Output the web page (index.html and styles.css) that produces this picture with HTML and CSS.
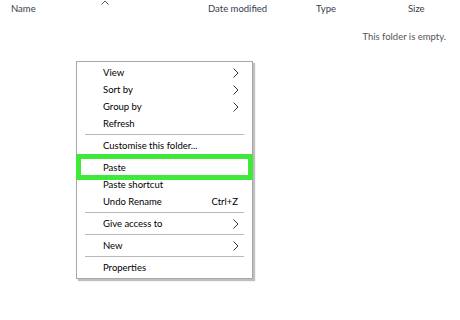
FILE: index.html
```html
<!DOCTYPE html>
<html lang="en">
<head>
  <meta charset="UTF-8">
  <title>This folder is empty</title>
  <link rel="stylesheet" href="styles.css">
</head>
<body>

<div id="explorer">
  <div class="column-header">
    <span class="col col-name">Name</span>
    <span class="col col-date">Date modified</span>
    <span class="col col-type">Type</span>
    <span class="col col-size">Size</span>
    <svg class="sort-caret" width="8" height="5" viewBox="0 0 8 5">
      <path d="M0.5 4.5 L4 1 L7.5 4.5" fill="none" stroke="#555" stroke-width="1"/>
    </svg>
  </div>
  <div class="empty-note">This folder is empty.</div>

  <div id="context-menu">
    <div class="menu-item">View<svg class="arrow" viewBox="0 0 6 10"><path d="M0.5 0.5 L5 5 L0.5 9.5"/></svg></div>
    <div class="menu-item">Sort by<svg class="arrow" viewBox="0 0 6 10"><path d="M0.5 0.5 L5 5 L0.5 9.5"/></svg></div>
    <div class="menu-item">Group by<svg class="arrow" viewBox="0 0 6 10"><path d="M0.5 0.5 L5 5 L0.5 9.5"/></svg></div>
    <div class="menu-item">Refresh</div>
    <div class="separator"></div>
    <div class="menu-item">Customise this folder...</div>
    <div class="separator"></div>
    <div class="menu-item">Paste</div>
    <div class="menu-item">Paste shortcut</div>
    <div class="menu-item">Undo Rename<span class="shortcut">Ctrl+Z</span></div>
    <div class="separator"></div>
    <div class="menu-item">Give access to<svg class="arrow" viewBox="0 0 6 10"><path d="M0.5 0.5 L5 5 L0.5 9.5"/></svg></div>
    <div class="separator"></div>
    <div class="menu-item">New<svg class="arrow" viewBox="0 0 6 10"><path d="M0.5 0.5 L5 5 L0.5 9.5"/></svg></div>
    <div class="separator"></div>
    <div class="menu-item">Properties</div>
  </div>

  <div class="highlight"></div>
</div>

</body>
</html>
```

FILE: styles.css
```css
body {
    margin: 0;
    padding: 0;
    background: #fff;
    font-family: 'Lato', 'Open Sans', sans-serif;
}

#explorer {
    position: relative;
    width: 460px;
    height: 320px;
    overflow: hidden;
}

.column-header {
    display: grid;
    grid-template-columns: 197px 108px 92px auto;
    padding: 3px 0 0 11px;
    height: 16px;
    font-size: 9.5px;
    color: #34404e;
}

.sort-caret {
    position: absolute;
    left: 101px;
    top: 0;
}

.empty-note {
    text-align: right;
    padding-right: 14px;
    margin-top: 12px;
    font-size: 9.5px;
    color: #555;
}

#context-menu {
    position: absolute;
    left: 76px;
    top: 61px;
    width: 175px;
    padding: 2px 0 2px;
    background: #fff;
    border: 1px solid #a8a8a8;
    box-shadow: 2px 2px 1px rgba(0, 0, 0, 0.25);
    font-size: 9.5px;
    color: #000;
}

.menu-item {
    display: flex;
    align-items: center;
    justify-content: space-between;
    height: 17px;
    padding: 0 10px 0 26px;
}

.shortcut {
    margin-right: 4px;
}

.arrow {
    width: 6px;
    height: 10px;
    margin-right: 3px;
    fill: none;
    stroke: #333;
    stroke-width: 1;
}

.separator {
    height: 1px;
    margin: 2px 8px 2px 8px;
    background: #b8b8b8;
}

.highlight {
    position: absolute;
    left: 76px;
    top: 154px;
    width: 167px;
    height: 16px;
    border: 5px solid #3fe83a;
}
```
